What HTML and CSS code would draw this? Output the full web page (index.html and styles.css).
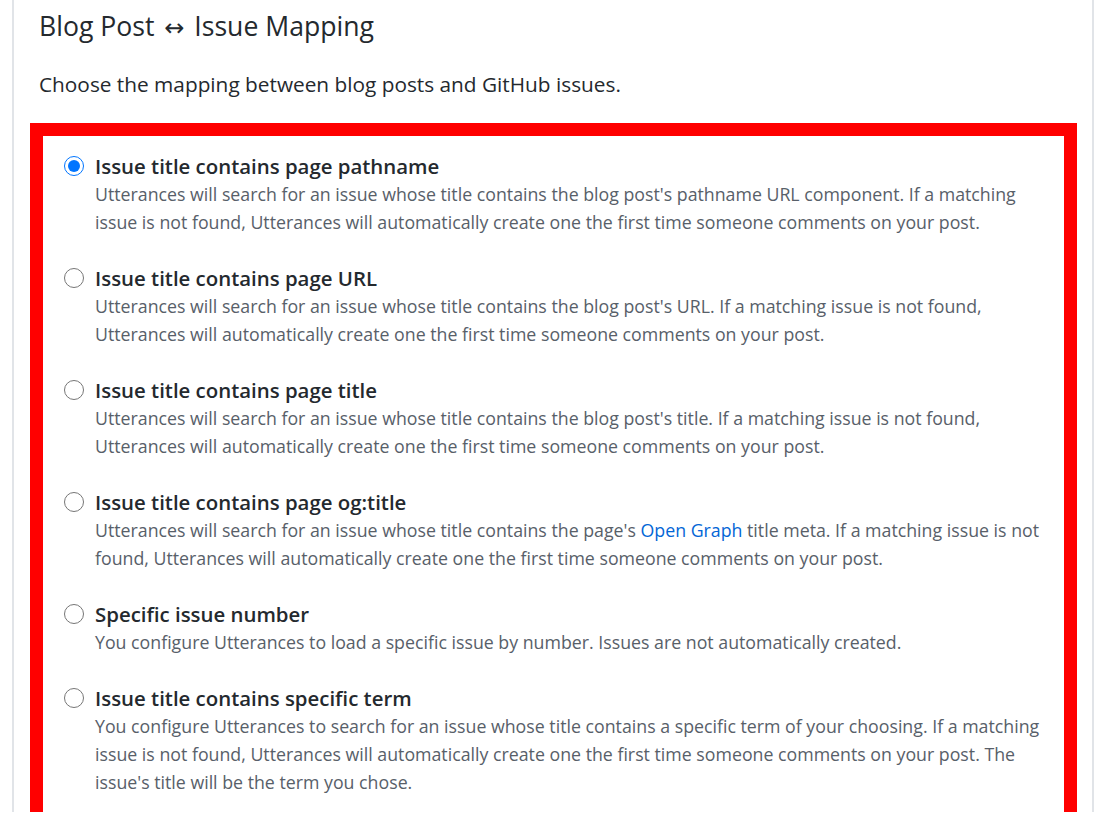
FILE: index.html
```html
<!DOCTYPE html>
<html lang="en">
<head>
    <meta charset="UTF-8">
    <meta name="viewport" content="width=device-width, initial-scale=1.0">
    <title>utterances - Blog Post ↔ Issue Mapping</title>
    <link rel="stylesheet" href="styles.css">
</head>
<body>
    <div class="page">
        <h3 class="section-title">Blog Post <span class="arrow">↔</span> Issue Mapping</h3>
        <p class="lead">Choose the mapping between blog posts and GitHub issues.</p>

        <fieldset class="mapping">
            <label class="option">
                <input type="radio" name="mapping" value="pathname" checked>
                <span class="option-title">Issue title contains page pathname</span>
                <span class="note">Utterances will search for an issue whose title contains the blog post's pathname URL component. If a matching issue is not found, Utterances will automatically create one the first time someone comments on your post.</span>
            </label>
            <label class="option">
                <input type="radio" name="mapping" value="url">
                <span class="option-title">Issue title contains page URL</span>
                <span class="note">Utterances will search for an issue whose title contains the blog post's URL. If a matching issue is not found, Utterances will automatically create one the first time someone comments on your post.</span>
            </label>
            <label class="option">
                <input type="radio" name="mapping" value="title">
                <span class="option-title">Issue title contains page title</span>
                <span class="note">Utterances will search for an issue whose title contains the blog post's title. If a matching issue is not found, Utterances will automatically create one the first time someone comments on your post.</span>
            </label>
            <label class="option">
                <input type="radio" name="mapping" value="og:title">
                <span class="option-title">Issue title contains page og:title</span>
                <span class="note">Utterances will search for an issue whose title contains the page's <a href="#">Open Graph</a> title meta. If a matching issue is not found, Utterances will automatically create one the first time someone comments on your post.</span>
            </label>
            <label class="option">
                <input type="radio" name="mapping" value="issue-number">
                <span class="option-title">Specific issue number</span>
                <span class="note">You configure Utterances to load a specific issue by number. Issues are not automatically created.</span>
            </label>
            <label class="option">
                <input type="radio" name="mapping" value="specific-term">
                <span class="option-title">Issue title contains specific term</span>
                <span class="note">You configure Utterances to search for an issue whose title contains a specific term of your choosing. If a matching issue is not found, Utterances will automatically create one the first time someone comments on your post. The issue's title will be the term you chose.</span>
            </label>
        </fieldset>
    </div>
</body>
</html>
```

FILE: styles.css
```css
body {
    margin: 0;
    padding: 0;
    background: #fff;
    color: #24292e;
    font-family: "Open Sans", "Noto Sans", Arial, sans-serif;
}
.page {
    box-sizing: border-box;
    margin-left: 12px;
    width: 1082px;
    height: 812px;
    border-left: 2px solid #e1e4e8;
    border-right: 2px solid #e1e4e8;
    padding: 0 15px 0 16px;
}
.section-title {
    margin: 0 0 0 9px;
    padding-top: 8px;
    font-size: 26.6px;
    font-weight: 500;
    line-height: 36px;
}
.section-title .arrow {
    font-family: "DejaVu Sans", sans-serif;
    font-weight: normal;
    font-size: 24px;
    line-height: 0;
    margin: 0 3px;
}
.lead {
    margin: 26px 0 0 9px;
    font-size: 20.8px;
    line-height: 28px;
}
.mapping {
    margin: 25px 0 0 0;
    padding: 16px 16px 0 21px;
    border: 13px solid #ff0000;
    min-width: 0;
}
.option {
    display: grid;
    grid-template-columns: 21px 1fr;
    column-gap: 10px;
    margin-bottom: 28px;
    cursor: pointer;
}
.option:last-child {
    margin-bottom: 26px;
}
.option input {
    width: 20px;
    height: 20px;
    margin: 4px 0 0 0;
    grid-row: 1;
    grid-column: 1;
}
.option-title {
    grid-column: 2;
    font-size: 20.4px;
    font-weight: 600;
    line-height: 28px;
}
.note {
    grid-column: 2;
    color: #586069;
    font-size: 17.75px;
    line-height: 28px;
}
.note a {
    color: #0366d6;
    text-decoration: none;
}
```
